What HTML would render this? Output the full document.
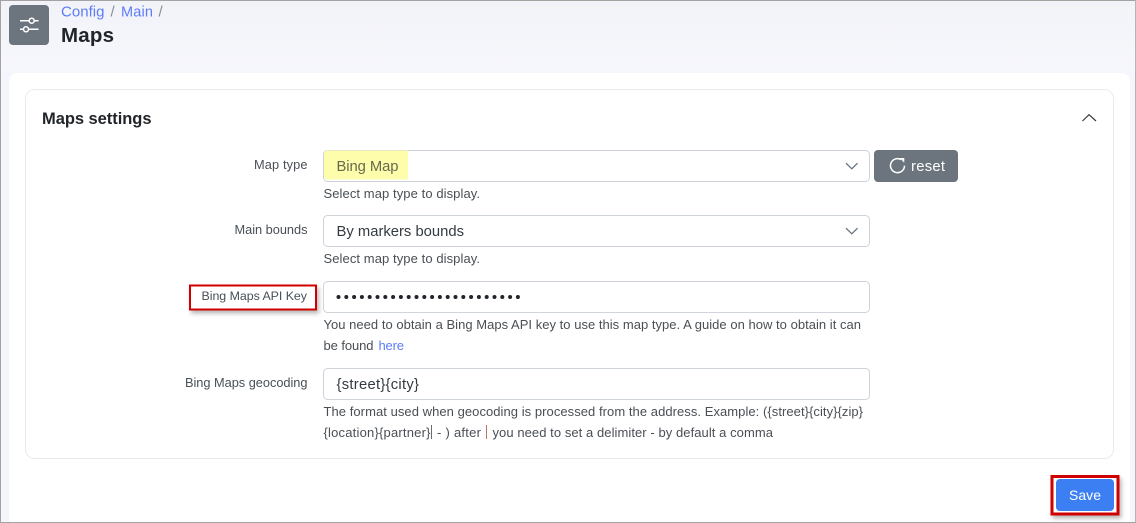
<!DOCTYPE html>
<html><head><meta charset="utf-8"><style>
html,body{margin:0;padding:0;width:1136px;height:523px;overflow:hidden;background:#f5f6fb}
svg{display:block;position:absolute;left:0;top:0}
text{font-family:"Liberation Sans",sans-serif}
.l{font-size:12.8px;fill:#495057}
.h{font-size:13px;fill:#4a4f55}
.v{font-size:14.800px;fill:#343a40}
</style></head><body>
<svg width="1136" height="523" viewBox="0 0 1136 523" xmlns="http://www.w3.org/2000/svg">
<defs>
<linearGradient id="bg" x1="0" y1="0" x2="0" y2="1"><stop offset="0" stop-color="#f2f3f8"/><stop offset="1" stop-color="#f6f7fc"/></linearGradient>
<filter id="sh" x="-20%" y="-30%" width="140%" height="170%"><feDropShadow dx="2" dy="3" stdDeviation="2" flood-color="#000" flood-opacity=".28"/></filter>
</defs>
<rect width="1136" height="523" fill="#f5f6fb"/>
<rect width="1136" height="70" fill="url(#bg)"/>
<rect x="9" y="73" width="1121" height="460" rx="8" fill="#fff"/>
<rect x="25.500" y="89.500" width="1088" height="369" rx="9" fill="#fff" stroke="#e9ebef"/>

<!-- window edges -->
<rect x="0" y="0" width="1136" height="1" fill="#a3a3a3"/>
<rect x="0" y="0" width="1" height="523" fill="#a3a3a3"/>
<rect x="1135" y="0" width="1" height="523" fill="#b5b5b5"/>
<rect x="0" y="522" width="1136" height="1" fill="#a3a3a3"/>

<!-- header icon -->
<rect x="9" y="5" width="40" height="40" rx="4" fill="#6c757d"/>
<path d="M20 20.700H29M34.500 20.700H38.500M20 29.300H23.500M28.500 29.300H38.500" stroke="#fff" stroke-width="1.500" fill="none"/>
<circle cx="31.700" cy="20.700" r="2.500" fill="none" stroke="#fff" stroke-width="1.500"/>
<circle cx="26" cy="29.300" r="2.500" fill="none" stroke="#fff" stroke-width="1.500"/>

<!-- breadcrumb -->
<text x="61" y="16.500" font-size="15" fill="#5c7cfa" textLength="43.500" lengthAdjust="spacing">Config</text>
<text x="110.500" y="16.500" font-size="15" fill="#868e96">/</text>
<text x="121" y="16.500" font-size="14.500" fill="#5c7cfa" textLength="32" lengthAdjust="spacing">Main</text>
<text x="158.500" y="16.500" font-size="15" fill="#868e96">/</text>
<text x="61" y="42" font-size="20.500" font-weight="bold" fill="#212529" textLength="53" lengthAdjust="spacing">Maps</text>

<!-- card title -->
<text x="42" y="124" font-size="16.500" font-weight="bold" fill="#212529" textLength="109.500" lengthAdjust="spacing">Maps settings</text>
<path d="M1082.500 121L1089 114.700L1096 121" fill="none" stroke="#343a40" stroke-width="1.200"/>

<!-- Map type -->
<text class="l" x="254" y="169" textLength="53.500" lengthAdjust="spacing">Map type</text>
<rect x="323.500" y="150.500" width="546" height="31" rx="4" fill="#fff" stroke="#ced4da"/>
<path d="M324 154a3.500 3.500 0 0 1 3.500-3.500H408V179.500H327.500a3.500 3.500 0 0 1-3.500-3.500Z" fill="#fdfdac"/>
<text class="v" x="336.500" y="171" textLength="62" lengthAdjust="spacing" style="fill:#676a4a">Bing Map</text>
<path d="M846 163.200L851.800 168.800L857.500 163.200" fill="none" stroke="#5f6b7a" stroke-width="1.200"/>
<text class="h" x="323.500" y="198" textLength="156.500" lengthAdjust="spacing">Select map type to display.</text>

<rect x="874" y="150" width="84" height="32" rx="4" fill="#6c757d"/>
<path d="M901 159.600A7 7 0 1 0 904.500 165.700" fill="none" stroke="#fff" stroke-width="1.500"/>
<path d="M899.800 158L904.300 158L904.200 162.800Z" fill="#fff"/>
<text x="911" y="171" font-size="14.800" fill="#fff" textLength="34" lengthAdjust="spacing">reset</text>

<!-- Main bounds -->
<text class="l" x="234.500" y="234" textLength="73" lengthAdjust="spacing">Main bounds</text>
<rect x="323.500" y="215.500" width="546" height="31" rx="4" fill="#fff" stroke="#ced4da"/>
<text class="v" x="336.500" y="236" textLength="127.500" lengthAdjust="spacing">By markers bounds</text>
<path d="M846 228.200L851.800 233.800L857.500 228.200" fill="none" stroke="#5f6b7a" stroke-width="1.200"/>
<text class="h" x="323.500" y="263" textLength="156.500" lengthAdjust="spacing">Select map type to display.</text>

<!-- API key -->
<rect x="190" y="285.500" width="126" height="24" fill="#fff" stroke="#d00000" stroke-width="2" filter="url(#sh)"/>
<text class="l" style="font-size:12.400px" x="201.500" y="300" textLength="105.500" lengthAdjust="spacing">Bing Maps API Key</text>
<rect x="323.500" y="281.500" width="546" height="31" rx="4" fill="#fff" stroke="#ced4da"/>
<g fill="#212529"><circle cx="338.500" cy="297" r="2"/><circle cx="346.300" cy="297" r="2"/><circle cx="354.100" cy="297" r="2"/><circle cx="361.900" cy="297" r="2"/><circle cx="369.700" cy="297" r="2"/><circle cx="377.500" cy="297" r="2"/><circle cx="385.300" cy="297" r="2"/><circle cx="393.100" cy="297" r="2"/><circle cx="400.900" cy="297" r="2"/><circle cx="408.700" cy="297" r="2"/><circle cx="416.500" cy="297" r="2"/><circle cx="424.300" cy="297" r="2"/><circle cx="432.100" cy="297" r="2"/><circle cx="439.900" cy="297" r="2"/><circle cx="447.700" cy="297" r="2"/><circle cx="455.500" cy="297" r="2"/><circle cx="463.300" cy="297" r="2"/><circle cx="471.100" cy="297" r="2"/><circle cx="478.900" cy="297" r="2"/><circle cx="486.700" cy="297" r="2"/><circle cx="494.500" cy="297" r="2"/><circle cx="502.300" cy="297" r="2"/><circle cx="510.100" cy="297" r="2"/><circle cx="517.900" cy="297" r="2"/></g>
<text class="h" x="323.500" y="329" textLength="537.500" lengthAdjust="spacing">You need to obtain a Bing Maps API key to use this map type. A guide on how to obtain it can</text>
<text class="h" x="323.500" y="350" textLength="50" lengthAdjust="spacing">be found</text>
<text x="378.500" y="350" font-size="13" fill="#5c7cfa" textLength="25.500" lengthAdjust="spacing">here</text>

<!-- geocoding -->
<text class="l" x="185" y="387" textLength="122.500" lengthAdjust="spacing">Bing Maps geocoding</text>
<rect x="323.500" y="368.500" width="546" height="31" rx="4" fill="#fff" stroke="#ced4da"/>
<text class="v" x="336.500" y="389" textLength="82.500" lengthAdjust="spacing">{street}{city}</text>
<text class="h" x="323.500" y="416" textLength="539.500" lengthAdjust="spacing">The format used when geocoding is processed from the address. Example: ({street}{city}{zip}</text>
<text class="h" x="323.500" y="437" textLength="107" lengthAdjust="spacing">{location}{partner}</text>
<rect x="431" y="425" width="1" height="14" fill="#6b6b6b"/>
<text class="h" x="437" y="437" textLength="44" lengthAdjust="spacing">- ) after</text>
<rect x="486" y="425" width="1" height="14" fill="#b87a5a"/>
<text class="h" x="492.500" y="437" textLength="280.500" lengthAdjust="spacing">you need to set a delimiter - by default a comma</text>

<!-- save -->
<rect x="1052" y="476.500" width="66" height="37.500" fill="#fff" stroke="#d00000" stroke-width="3" filter="url(#sh)"/>
<rect x="1056" y="479" width="58" height="32" rx="4" fill="#3b7ff2"/>
<text x="1069" y="500" font-size="14" fill="#fff" textLength="32" lengthAdjust="spacing">Save</text>
</svg>
</body></html>
